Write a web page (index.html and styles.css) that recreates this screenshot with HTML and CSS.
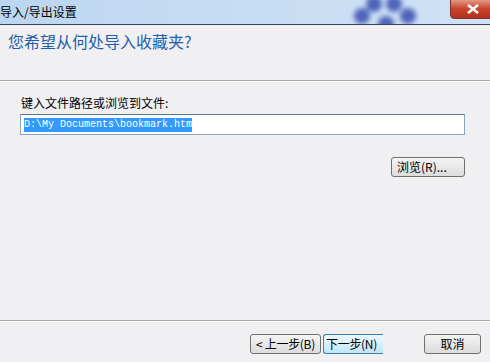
FILE: index.html
```html
<!DOCTYPE html>
<html lang="zh-CN">
<head>
    <meta charset="UTF-8">
    <title>导入/导出设置</title>
    <link rel="stylesheet" href="styles.css">
</head>
<body>
    <div class="titlebar">
        <span class="title">导入/导出设置</span>
        <div class="deco">
            <span class="dot d1"></span>
            <span class="dot d2"></span>
            <span class="dot d3"></span>
            <span class="dot d4"></span>
            <span class="dot d5"></span>
        </div>
        <div class="close">
            <svg width="14" height="10" viewBox="0 0 14 10"><path d="M2 1 L12 9 M12 1 L2 9" stroke="#fff" stroke-width="2.6"/></svg>
        </div>
    </div>

    <div class="header">
        <h2>您希望从何处导入收藏夹?</h2>
    </div>

    <div class="content">
        <label>键入文件路径或浏览到文件:</label>
        <div class="field"><span class="sel">D:\My Documents\bookmark.htm</span></div>
        <div class="browse-row">
            <button class="btn browse">浏览(R)...</button>
        </div>
    </div>

    <div class="footer">
        <button class="btn back">&lt; 上一步(B)</button>
        <button class="btn next">下一步(N)</button>
        <button class="btn cancel">取消</button>
    </div>
</body>
</html>
```

FILE: styles.css
```css
body {
    margin: 0;
    width: 490px;
    height: 362px;
    overflow: hidden;
    background: #f0eff1;
    font-family: "Noto Sans CJK SC", "Liberation Sans", sans-serif;
    font-size: 12px;
    color: #000;
}
.titlebar {
    height: 24px;
    position: relative;
    background: linear-gradient(90deg, #bcd6f0, #c9def3 60%, #cfe2f6);
    border-bottom: 1px solid #3b4456;
    display: flex;
    align-items: center;
    overflow: hidden;
}
.title {
    margin-left: 0;
    font-size: 12px;
    line-height: 24px;
}
.deco {
    position: absolute;
    left: 348px;
    top: -4px;
    width: 80px;
    height: 34px;
    filter: blur(2.5px);
    opacity: 0.85;
}
.dot {
    position: absolute;
    width: 16px;
    height: 16px;
    border-radius: 50%;
    background: #3a4fb0;
}
.d1 { left: 18px; top: 0; }
.d2 { left: 38px; top: 0; }
.d3 { left: 6px; top: 12px; }
.d4 { left: 52px; top: 12px; }
.d5 { left: 30px; top: 20px; }
.close {
    position: absolute;
    right: -6px;
    top: -2px;
    width: 44px;
    height: 19px;
    border-radius: 0 0 4px 4px;
    border: 1px solid #7a3a30;
    background: linear-gradient(#e7a290, #c9452d 50%, #b4301b);
    display: flex;
    align-items: center;
    justify-content: center;
}
.header {
    height: 55px;
    border-bottom: 1px solid #a9a9ab;
    box-shadow: 0 1px 0 #fff;
}
h2 {
    margin: 0;
    padding: 4px 0 0 8px;
    font-weight: normal;
    font-size: 16px;
    color: #1f5fae;
}
.content {
    height: 226px;
    padding: 13px 25px 0 20px;
    border-bottom: 1px solid #a9a9ab;
    box-shadow: 0 1px 0 #fff;
}
label {
    display: block;
    padding-left: 1px;
    line-height: 18px;
}
.field {
    margin-top: 2px;
    height: 19px;
    background: #fff;
    border: 1px solid #8aa5bb;
    border-top-color: #5d7890;
    display: flex;
    align-items: center;
    padding-left: 3px;
}
.sel {
    background: #3399ff;
    color: #fff;
    font-family: "Liberation Mono", monospace;
    font-size: 10px;
    line-height: 14px;
}
.browse-row {
    display: flex;
    justify-content: flex-end;
    margin-top: 22px;
}
.btn {
    font-family: "Noto Sans CJK SC", "Liberation Sans", sans-serif;
    font-size: 12px;
    height: 20px;
    padding: 0 2px;
    border: 1px solid #707070;
    border-radius: 3px;
    background: linear-gradient(#f4f4f4, #e8e8e8 50%, #dcdcdc);
    color: #000;
    line-height: 16px;
    white-space: nowrap;
    overflow: hidden;
}
.browse {
    width: 74px;
    text-align: left;
    padding-left: 5px;
}
.footer {
    display: flex;
    align-items: center;
    padding: 13px 0 0 250px;
}
.back {
    width: 71px;
    letter-spacing: -0.3px;
}
.next {
    width: 60px;
    margin-left: 2px;
    border-color: #3c7fb1;
    background: linear-gradient(#eaf6fd, #d9f0fc 50%, #bee6fd);
    text-align: left;
    border-right: none;
    border-radius: 3px 0 0 3px;
    letter-spacing: -0.3px;
}
.cancel {
    width: 57px;
    margin-left: 41px;
}
```
